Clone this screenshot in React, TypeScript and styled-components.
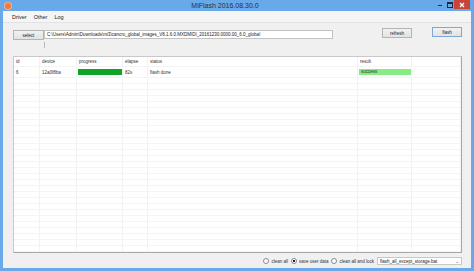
import React from "react";
import styled, { createGlobalStyle } from "styled-components";

const GlobalStyle = createGlobalStyle`
  html, body {
    margin: 0;
    padding: 0;
    overflow: hidden;
    background: #6aa9e9;
  }
`;

const columns = [
  { key: "id", label: "id", width: 26 },
  { key: "device", label: "device", width: 37 },
  { key: "progress", label: "progress", width: 46 },
  { key: "elapse", label: "elapse", width: 25 },
  { key: "status", label: "status", width: 210 },
  { key: "result", label: "result", width: 54 },
  { key: "extra", label: "", width: 0 },
];

const emptyRows = Array.from({ length: 30 }, (_, i) => i);

export default function App() {
  return (
    <Window>
      <GlobalStyle />
      <TitleBar>
        <AppIcon />
        <Title>MiFlash 2016.08.30.0</Title>
        <Controls>
          <MinButton>
            <MinGlyph />
          </MinButton>
          <MaxButton>
            <MaxGlyph />
          </MaxButton>
          <CloseButton>
            <svg width="6" height="6" viewBox="0 0 6 6">
              <path d="M1 1L5 5M5 1L1 5" stroke="#fff" strokeWidth="1.3" />
            </svg>
          </CloseButton>
        </Controls>
      </TitleBar>
      <Client>
        <MenuBar>
          <MenuItem>Driver</MenuItem>
          <MenuItem>Other</MenuItem>
          <MenuItem>Log</MenuItem>
        </MenuBar>
        <Body>
          <TopRow>
            <Button $top={7} $w={31}>select</Button>
            <PathBox>C:\Users\Admin\Downloads\mi3\cancro_global_images_V8.1.6.0.MXDMIDI_20161230.0000.00_6.0_global</PathBox>
            <Spacer />
            <Button $top={5} $w={30}>refresh</Button>
            <Button $top={4} $w={30} $default>flash</Button>
          </TopRow>
          <Splitter />
          <Table>
            <HeadRow>
              {columns.map((c) => (
                <Cell key={c.key} $w={c.width}>{c.label}</Cell>
              ))}
            </HeadRow>
            <DataRow>
              <Cell $w={26}>6</Cell>
              <Cell $w={37}>12a0f8ba</Cell>
              <Cell $w={46}>
                <Bar $color="#10a326" />
              </Cell>
              <Cell $w={25}>82s</Cell>
              <Cell $w={210}>flash done</Cell>
              <Cell $w={54}>
                <Bar $color="#86ec86">success</Bar>
              </Cell>
              <Cell $w={0} />
            </DataRow>
            {emptyRows.map((r) => (
              <EmptyRow key={r}>
                {columns.map((c) => (
                  <Cell key={c.key} $w={c.width} />
                ))}
              </EmptyRow>
            ))}
          </Table>
          <Footer>
            <Radio>
              <RadioDot />
              clean all
            </Radio>
            <Radio>
              <RadioDot $checked />
              save user data
            </Radio>
            <Radio>
              <RadioDot />
              clean all and lock
            </Radio>
            <Select>
              <span>flash_all_except_storage.bat</span>
              <Arrow>⌄</Arrow>
            </Select>
          </Footer>
        </Body>
      </Client>
    </Window>
  );
}

const Window = styled.div`
  width: 474px;
  height: 271px;
  box-sizing: border-box;
  padding: 0 3px 3px 3px;
  background: #6aa9e9;
  display: flex;
  flex-direction: column;
  font-family: "Liberation Sans", Arial, sans-serif;
  color: #333;
`;

const TitleBar = styled.div`
  height: 11px;
  flex: none;
  display: flex;
  align-items: center;
  position: relative;
`;

const AppIcon = styled.div`
  width: 6px;
  height: 6px;
  margin-left: 2px;
  border-radius: 50%;
  background: #f07a3c;
  box-shadow: 0 0 0 1px #f3b08c;
`;

const Title = styled.div`
  flex: 1;
  text-align: center;
  font-size: 7px;
  color: #223246;
  padding-left: 4px;
`;

const Controls = styled.div`
  display: flex;
  align-items: flex-start;
  align-self: flex-start;
  height: 10px;
  margin-right: 1px;
`;

const MinButton = styled.div`
  width: 10px;
  height: 9px;
  display: flex;
  align-items: center;
  justify-content: center;
`;

const MinGlyph = styled.div`
  width: 4px;
  height: 1px;
  margin-top: 2px;
  background: #1d2a3a;
`;

const MaxButton = styled.div`
  width: 9px;
  height: 9px;
  display: flex;
  align-items: center;
  justify-content: center;
`;

const MaxGlyph = styled.div`
  width: 4px;
  height: 3px;
  border: 1px solid #1d2a3a;
  border-top-width: 2px;
`;

const CloseButton = styled.div`
  width: 16px;
  height: 9px;
  background: #c7443a;
  display: flex;
  align-items: center;
  justify-content: center;
`;

const Client = styled.div`
  flex: 1;
  background: #f0f0f0;
  display: flex;
  flex-direction: column;
  min-height: 0;
`;

const MenuBar = styled.div`
  height: 10px;
  display: flex;
  align-items: center;
  gap: 7px;
  padding-left: 9px;
  padding-top: 1px;
  font-size: 5.5px;
  color: #222;
  border-bottom: 1px solid #e3e3e3;
  background: #f5f5f5;
`;

const MenuItem = styled.span``;

const Body = styled.div`
  flex: 1;
  display: flex;
  flex-direction: column;
  padding: 0 9px 0 10px;
  min-height: 0;
`;

const TopRow = styled.div`
  display: flex;
  align-items: flex-start;
  height: 16px;
`;

const Button = styled.div<{ $top: number; $w: number; $default?: boolean }>`
  margin-top: ${(p) => p.$top}px;
  width: ${(p) => p.$w}px;
  height: 10px;
  box-sizing: border-box;
  border: 1px solid ${(p) => (p.$default ? "#7fa7d3" : "#b4b4b4")};
  background: linear-gradient(#f2f2f2, #e2e2e2);
  font-size: 4.5px;
  display: flex;
  align-items: center;
  justify-content: center;
  color: #222;
  & + & {
    margin-left: 20px;
  }
`;

const PathBox = styled.div`
  margin-top: 7px;
  width: 289px;
  height: 9px;
  box-sizing: border-box;
  border: 1px solid #c2c2c2;
  background: #fff;
  font-size: 4.5px;
  line-height: 7px;
  padding-left: 2px;
  white-space: nowrap;
  overflow: hidden;
  color: #222;
`;

const Spacer = styled.div`
  flex: 1;
`;

const Splitter = styled.div`
  margin-left: 31px;
  margin-top: 3px;
  width: 1px;
  height: 6px;
  background: #b8b8b8;
  margin-bottom: 8px;
`;

const Table = styled.div`
  height: 197px;
  box-sizing: border-box;
  border: 1px solid #c8c8c8;
  border-right-color: #a8a8a8;
  border-bottom-color: #a8a8a8;
  background: #fff;
  overflow: hidden;
  font-size: 4.5px;
  color: #333;
`;

const Row = styled.div`
  display: flex;
  border-bottom: 1px solid #f4f4f4;
`;

const HeadRow = styled(Row)`
  height: 9px;
  align-items: center;
`;

const DataRow = styled(Row)`
  height: 10px;
  align-items: center;
`;

const EmptyRow = styled(Row)`
  height: 5px;
`;

const Cell = styled.div<{ $w: number }>`
  ${(p) => (p.$w ? `width: ${p.$w}px; flex: none;` : "flex: 1;")}
  align-self: stretch;
  display: flex;
  align-items: center;
  box-sizing: border-box;
  padding-left: 2px;
  border-right: 1px solid #f2f2f2;
  white-space: nowrap;
`;

const Bar = styled.div<{ $color: string }>`
  flex: 1;
  height: 6px;
  margin-left: -1px;
  background: ${(p) => p.$color};
  font-size: 4.5px;
  line-height: 6px;
  padding-left: 2px;
  color: #333;
`;

const Footer = styled.div`
  flex: 1;
  display: flex;
  align-items: center;
  justify-content: flex-end;
  padding-top: 1px;
  font-size: 4.5px;
  color: #333;
`;

const Radio = styled.div`
  display: flex;
  align-items: center;
  gap: 2px;
  margin-right: 3px;
`;

const RadioDot = styled.div<{ $checked?: boolean }>`
  width: 4px;
  height: 4px;
  border-radius: 50%;
  border: 1px solid #8a8a8a;
  background: ${(p) => (p.$checked ? "radial-gradient(circle, #222 45%, #fff 55%)" : "#fff")};
`;

const Select = styled.div`
  width: 85px;
  height: 8px;
  box-sizing: border-box;
  border: 1px solid #c8c8c8;
  background: #fff;
  display: flex;
  align-items: center;
  justify-content: space-between;
  padding: 0 2px;
  font-size: 4.5px;
  color: #222;
`;

const Arrow = styled.span`
  font-size: 5px;
  line-height: 3px;
  color: #555;
`;
